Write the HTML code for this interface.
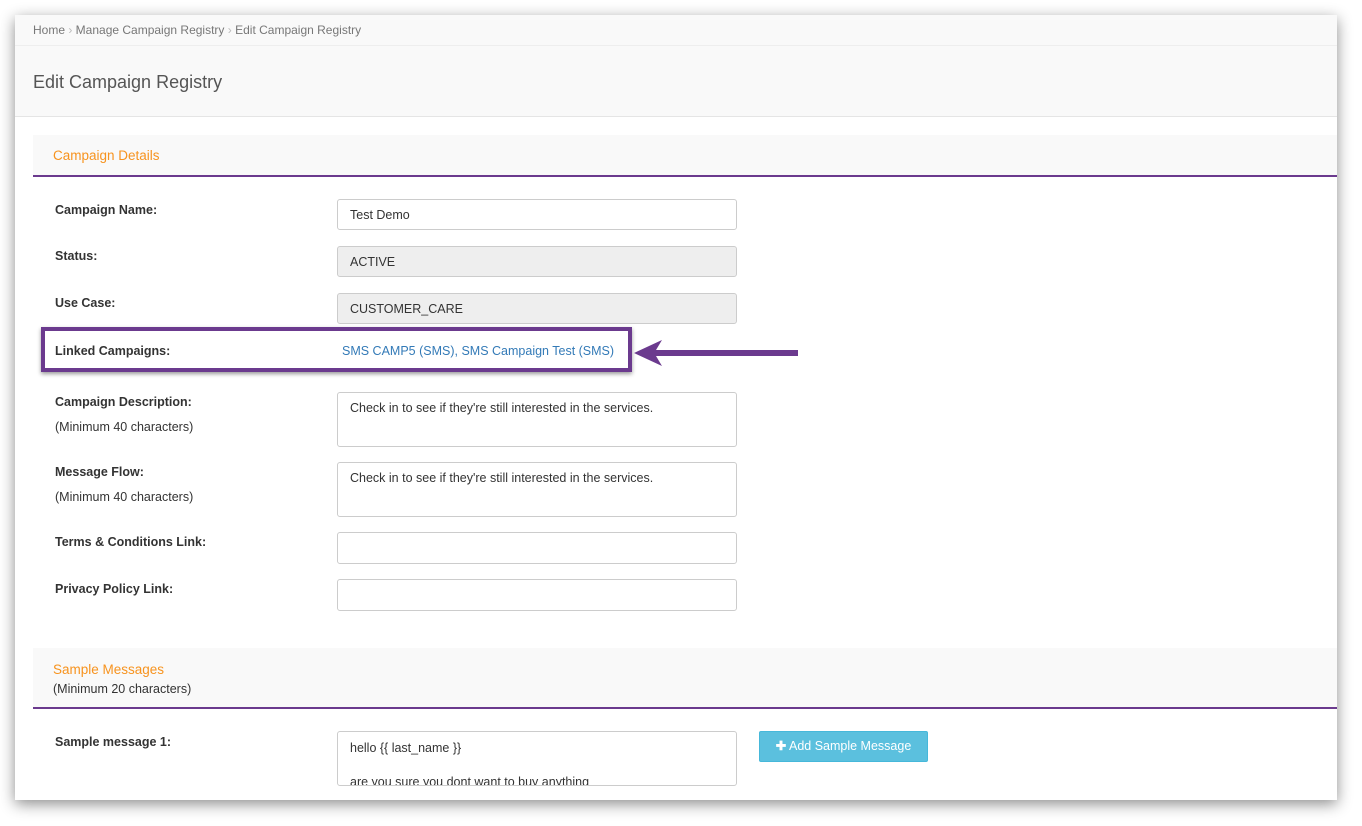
<!DOCTYPE html>
<html><head><style>
body{margin:0;width:1362px;height:826px;background:#fff;font-family:"Liberation Sans",sans-serif;position:relative;overflow:hidden}
.win{position:absolute;left:15px;top:15px;width:1322px;height:785px;background:#fff;box-shadow:0 4px 14px rgba(0,0,0,.45);overflow:hidden}
.a{position:absolute}
.lbl{position:absolute;left:40px;font-size:12.5px;font-weight:bold;color:#333}
.sub{position:absolute;left:40px;font-size:12.5px;color:#333}
.inp{position:absolute;left:322px;width:400px;border:1px solid #ccc;border-radius:3px;background:#fff;font-size:12.5px;color:#333;box-sizing:border-box;padding:8px 12px}
.dis{background:#eee}
</style></head><body>
<div class="win">
<div class="a" style="left:0;top:0;width:1322px;height:30px;background:#f9f9f9;border-bottom:1px solid #eee"></div>
<div class="a" style="left:18px;top:8px;font-size:12px;color:#777">Home <span style="color:#bbb">›</span> Manage Campaign Registry <span style="color:#bbb">›</span> Edit Campaign Registry</div>
<div class="a" style="left:0;top:31px;width:1322px;height:70px;background:#f9f9f9;border-bottom:1px solid #e5e5e5"></div>
<div class="a" style="left:18px;top:57px;font-size:18px;color:#555">Edit Campaign Registry</div>
<div class="a" style="left:18px;top:120px;width:1304px;height:40px;background:#f9f9f9;border-bottom:2px solid #6b3a8e"></div>
<div class="a" style="left:38px;top:133px;font-size:13.5px;color:#f7931e">Campaign Details</div>
<div class="lbl" style="top:188px">Campaign Name:</div>
<div class="inp" style="top:184px;height:31px">Test Demo</div>
<div class="lbl" style="top:234px">Status:</div>
<div class="inp dis" style="top:231px;height:31px">ACTIVE</div>
<div class="lbl" style="top:281px">Use Case:</div>
<div class="inp dis" style="top:278px;height:31px">CUSTOMER_CARE</div>
<div class="a" style="left:26px;top:312px;width:591px;height:45px;border:4px solid #6b3a8e;box-sizing:border-box;box-shadow:0 2px 4px rgba(0,0,0,.4)"></div>
<div class="lbl" style="top:329px">Linked Campaigns:</div>
<div class="a" style="left:327px;top:329px;font-size:12.5px;color:#337ab7">SMS CAMP5 (SMS), SMS Campaign Test (SMS)</div>
<svg class="a" style="left:617px;top:322px" width="170" height="32"><path d="M2 16 L30 3 L24 13 L166 13 L166 19 L24 19 L30 29 Z" fill="#6b3a8e"/><rect x="20" y="13" width="144" height="6" rx="3" fill="#6b3a8e"/></svg>
<div class="lbl" style="top:380px">Campaign Description:</div>
<div class="sub" style="top:405px">(Minimum 40 characters)</div>
<div class="inp" style="top:377px;height:55px">Check in to see if they're still interested in the services.</div>
<div class="lbl" style="top:450px">Message Flow:</div>
<div class="sub" style="top:475px">(Minimum 40 characters)</div>
<div class="inp" style="top:447px;height:55px">Check in to see if they're still interested in the services.</div>
<div class="lbl" style="top:520px">Terms &amp; Conditions Link:</div>
<div class="inp" style="top:517px;height:32px"></div>
<div class="lbl" style="top:567px">Privacy Policy Link:</div>
<div class="inp" style="top:564px;height:32px"></div>
<div class="a" style="left:18px;top:633px;width:1304px;height:59px;background:#f9f9f9;border-bottom:2px solid #6b3a8e"></div>
<div class="a" style="left:38px;top:647px;font-size:13.5px;color:#f7931e">Sample Messages</div>
<div class="a" style="left:38px;top:667px;font-size:12.5px;color:#333">(Minimum 20 characters)</div>
<div class="lbl" style="top:720px">Sample message 1:</div>
<div class="inp" style="top:716px;height:55px;overflow:hidden;line-height:17px">hello {{ last_name }}<br><br>are you sure you dont want to buy anything</div>
<div class="a" style="left:744px;top:716px;width:169px;height:31px;background:#5bc0de;border:1px solid #46b8da;box-sizing:border-box;color:#fff;font-size:12.5px;text-align:center;line-height:29px;border-radius:2px"><b>✚</b> Add Sample Message</div>
</div>
</body></html>
